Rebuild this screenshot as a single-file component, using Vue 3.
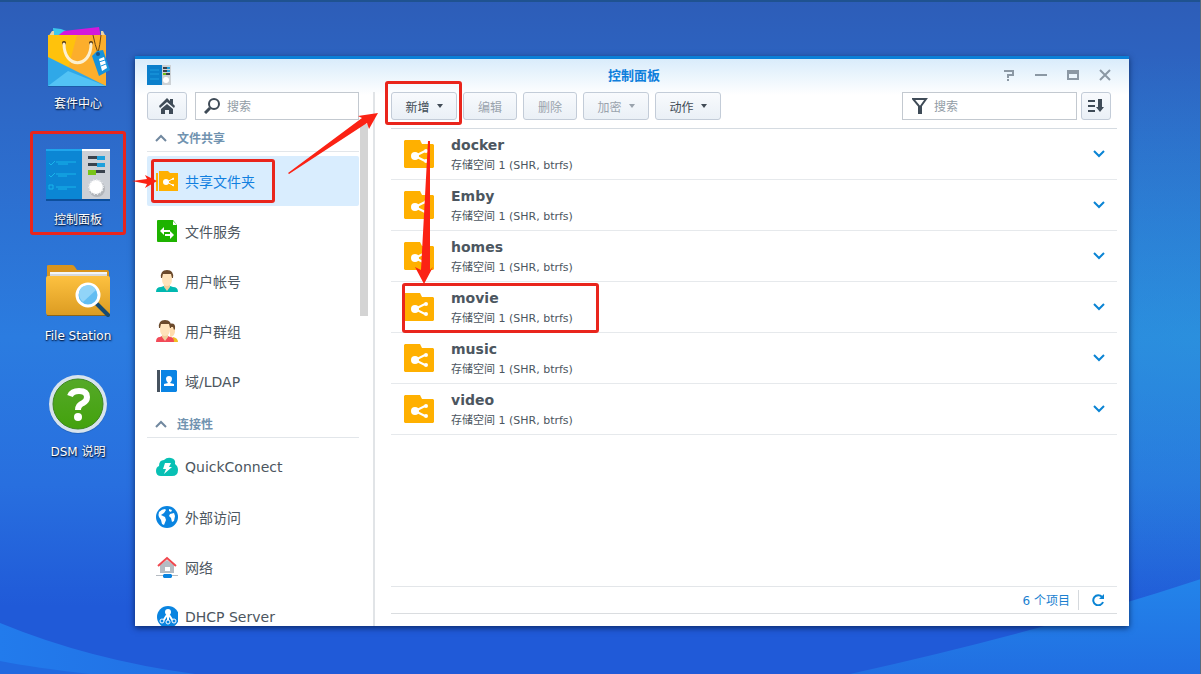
<script setup>
import { ref } from 'vue'

const sideQuery = ref('')
const filterQuery = ref('')
const selected = ref('share')

const shortcuts = [
  { id: 'bag', label: '套件中心' },
  { id: 'panel', label: '控制面板' },
  { id: 'files', label: 'File Station' },
  { id: 'help', label: 'DSM 说明' },
]

const groups = [
  {
    title: '文件共享',
    items: [
      { id: 'share', label: '共享文件夹' },
      { id: 'service', label: '文件服务' },
      { id: 'user', label: '用户帐号' },
      { id: 'group', label: '用户群组' },
      { id: 'ldap', label: '域/LDAP' },
    ],
  },
  {
    title: '连接性',
    items: [
      { id: 'quick', label: 'QuickConnect' },
      { id: 'globe', label: '外部访问' },
      { id: 'network', label: '网络' },
      { id: 'dhcp', label: 'DHCP Server' },
    ],
  },
]

const actions = [
  { label: '新增', menu: true, disabled: false },
  { label: '编辑', menu: false, disabled: true },
  { label: '删除', menu: false, disabled: true },
  { label: '加密', menu: true, disabled: true },
  { label: '动作', menu: true, disabled: false },
]

const folders = ['docker', 'Emby', 'homes', 'movie', 'music', 'video']
</script>

<template>
  <div class="desktop">
    <svg class="wallpaper" viewBox="0 0 1201 674" preserveAspectRatio="none" aria-hidden="true">
      <defs>
        <linearGradient id="waveL" x1="0" y1="0" x2="1" y2="0">
          <stop offset="0" stop-color="#227bec" />
          <stop offset="1" stop-color="#2270e4" />
        </linearGradient>
        <linearGradient id="waveR" x1="0" y1="0" x2="0" y2="1">
          <stop offset="0" stop-color="#2384ea" />
          <stop offset="1" stop-color="#216fe2" />
        </linearGradient>
      </defs>
      <path d="M0 623Q90 660 195 674H0Z" fill="url(#waveL)" />
      <path d="M0 661Q35 668 90 674H0Z" fill="#2169e0" />
      <path d="M1201 579Q1040 632 850 674H1201Z" fill="url(#waveR)" />
      <path d="M0 0H1201V2H0Z" fill="#1f5290" />
      <path d="M1200 0H1201V674H1200Z" fill="#55697f" />
    </svg>

    <nav class="shortcuts" aria-label="桌面">
      <button v-for="s in shortcuts" :key="s.id" class="shortcut" type="button">
        <svg v-if="s.id === 'bag'" class="big-icon" viewBox="0 0 64 64">
          <path d="M7 2l8 1 8 3-15 8z" fill="#3cc8ec" />
          <path d="M10 11l8-6 35-4 2 11z" fill="#d418dc" />
          <path d="M2 11l4-6h2v7zM60 11l-3-6h-2v7z" fill="#e8d5a8" />
          <path d="M2 9h58v51H2z" fill="#ffc20c" />
          <path d="M31 9h29v51L22 43z" fill="#fcae2c" />
          <path d="M2 31v29h58z" fill="#2fa8e8" />
          <path d="M2 60l20-15 38 15z" fill="#53c3f5" />
          <path d="M2 60h58v1H2z" fill="#1c5ba8" />
          <circle cx="18" cy="17" r="2" fill="#4c3413" />
          <circle cx="45" cy="17" r="2" fill="#4c3413" />
          <path d="M18 18c0 25 27 25 27 0" fill="none" stroke="#fdf0cf" stroke-width="3" stroke-linecap="round" />
          <path d="M47 9q2 10 5 18M55 9q-1 10-3 18" fill="none" stroke="#6b4511" stroke-width="1" />
          <path d="M46 30l5-5 6-1 7 20-11 6z" fill="#1693dc" />
          <circle cx="52" cy="28" r="2" fill="#1b5288" />
          <path d="M53 33l5-2 3 11-5 3z" fill="#fff" />
          <path d="M53 36l6-2M55 40l5-2" stroke="#1693dc" stroke-width="1" />
        </svg>
        <svg v-else-if="s.id === 'panel'" class="big-icon" viewBox="0 0 64 64">
          <path d="M0 7h36v51H0z" fill="#0b86d4" />
          <path d="M0 7h36v2H0z" fill="#1fa5ec" />
          <path d="M36 7h28v51H36z" fill="#ccd0d6" />
          <path d="M36 7h28v2H36z" fill="#fff" />
          <path d="M0 57h64v2H0z" fill="#0d4f9d" />
          <path d="M3 21l2 2 4-4M3 33l2 2 4-4M3 43h4v4H3zM10 20h20M12 22h10M10 32h20M12 34h9M10 45h20M12 47h9" fill="none" stroke="#18b5ea" stroke-width="1" />
          <path d="M42 14h16v3H42zM42 21h16v3H42zM42 28h17v3H42z" fill="#39424d" />
          <path d="M51 14h8v4h-8zM51 21h8v4h-8z" fill="#1ea0dc" />
          <path d="M42 28h8v5h-8z" fill="#78c418" />
          <circle cx="51" cy="47" r="8" fill="#b1b5ba" />
          <circle cx="50" cy="45" r="7" fill="#fff" />
          <circle cx="50" cy="45" r="7" fill="none" stroke="#e8eaed" stroke-width="2" stroke-dasharray="1 2" />
        </svg>
        <svg v-else-if="s.id === 'files'" class="big-icon" viewBox="0 0 64 64">
          <defs>
            <linearGradient id="folderFront" x1="0" y1="0" x2="0" y2="1">
              <stop offset="0" stop-color="#fdc140" />
              <stop offset="1" stop-color="#dc9c22" />
            </linearGradient>
          </defs>
          <path d="M1 8q0-1 2-1h23q2 0 3 2l2 3h30q2 0 2 2v20H1z" fill="#d8941d" />
          <path d="M4 14h57v8H4z" fill="#f4f5f6" />
          <path d="M4 17h57" stroke="#b9bcc0" stroke-width="1" />
          <path d="M0 20q0-2 2-2h60q2 0 2 2v35q0 2-2 2H2q-2 0-2-2z" fill="url(#folderFront)" />
          <path d="M1 57h62v1H1z" fill="#8a651b" />
          <path d="M51 46l11 11" stroke="#174b72" stroke-width="4" stroke-linecap="round" />
          <circle cx="42" cy="37" r="11" fill="#62bdf2" stroke="#fff" stroke-width="3" />
          <path d="M33 35a9 9 0 0 1 17-3L37 44q-4-3-4-9z" fill="#91d4f8" />
        </svg>
        <svg v-else class="big-icon" viewBox="0 0 64 64">
          <defs>
            <linearGradient id="helpFill" x1="0" y1="0" x2="0" y2="1">
              <stop offset="0" stop-color="#55a928" />
              <stop offset="1" stop-color="#43a20d" />
            </linearGradient>
          </defs>
          <circle cx="32" cy="31" r="29" fill="#1d5aa4" opacity=".5" />
          <circle cx="32" cy="30" r="29" fill="#d7e3ee" />
          <circle cx="32" cy="30" r="25" fill="url(#helpFill)" stroke="#3c8521" stroke-width="1" />
          <path d="M24 22q2-5 9-5 8 0 8 6 0 4-4 6-5 2-5 7" fill="none" stroke="#fff" stroke-width="6" />
          <circle cx="32" cy="43" r="4" fill="#fff" />
        </svg>
        <span>{{ s.label }}</span>
      </button>
    </nav>

    <main class="window">
      <header class="titlebar">
        <svg class="app-icon" viewBox="0 0 24 20">
          <path d="M0 0h15v20H0z" fill="#0b7fcb" />
          <path d="M3 5h9M3 9h9M3 14h9" stroke="#1f9ee0" stroke-width="1" />
          <path d="M15 0h9v20h-9z" fill="#cdd2d6" />
          <path d="M16 3h4M16 6h4M19 9h4" stroke="#39424d" stroke-width="2" />
          <path d="M20 3h3M20 6h3" stroke="#1ea0dc" stroke-width="2" />
          <path d="M16 9h3" stroke="#6fbe1a" stroke-width="2" />
          <circle cx="19" cy="15" r="3" fill="#fff" />
        </svg>
        <h1>控制面板</h1>
        <div class="controls">
          <button type="button" aria-label="帮助"><svg viewBox="0 0 12 12"><path d="M1 2h9v4H5v3M5 10v2" /></svg></button>
          <button type="button" aria-label="最小化"><svg viewBox="0 0 12 12"><path d="M0 6h12" /></svg></button>
          <button type="button" aria-label="最大化"><svg viewBox="0 0 12 12"><path d="M0 1h12v4H0z" class="solid" /><path d="M1 2v8h10V2" /></svg></button>
          <button type="button" aria-label="关闭"><svg viewBox="0 0 12 12"><path d="M1 1l10 10M11 1L1 11" /></svg></button>
        </div>
      </header>

      <div class="body">
        <aside class="sidebar">
          <div class="side-tools">
            <button class="btn home" type="button" aria-label="首页">
              <svg viewBox="0 0 16 16">
                <path d="M0 8l8-8 3 3V1h3v5l2 2-1 2-7-6-7 6z" />
                <path d="M2 11l6-5 6 5v5h-4v-4H6v4H2z" />
              </svg>
            </button>
            <label class="field side-field">
              <svg class="magnifier" viewBox="0 0 16 16">
                <circle cx="10" cy="6" r="5" />
                <path d="M6 10l-5 5" class="handle" />
              </svg>
              <input v-model="sideQuery" type="text" placeholder="搜索" aria-label="搜索" />
            </label>
          </div>
          <div class="side-body">
            <nav class="side-nav" aria-label="控制面板">
              <section v-for="g in groups" :key="g.title">
                <h2>
                  <svg viewBox="0 0 12 8"><path d="M1 7l5-5 5 5" /></svg>
                  {{ g.title }}
                </h2>
                <button
                  v-for="i in g.items"
                  :key="i.id"
                  type="button"
                  class="nav-item"
                  :class="{ active: selected === i.id }"
                  @click="selected = i.id"
                >
                  <svg viewBox="0 0 22 22">
                    <g v-if="i.id === 'share'">
                      <path d="M0 3h2v18H0z" fill="#ffb000" />
                      <path d="M3 1h9l2 2h8v18H3z" fill="#ffb000" />
                      <path d="M18 8l-7 4 7 4" fill="none" stroke="#fff" stroke-width="1" />
                      <circle cx="10" cy="12" r="3" fill="#fff" /><circle cx="17" cy="9" r="1" fill="#fff" /><circle cx="17" cy="15" r="1" fill="#fff" />
                    </g>
                    <g v-else-if="i.id === 'service'">
                      <path d="M2 0h15l4 5v17H2q-1 0-1-1V1q0-1 1-1z" fill="#1eb300" />
                      <path d="M17 1v4h4z" fill="#fff" />
                      <path d="M4 11l4-4v3h6v2H8v3zM18 15l-4-4v3H9v2h5v3z" fill="#fff" />
                    </g>
                    <g v-else-if="i.id === 'user'">
                      <path d="M0 22q0-5 5-5l3-1h6l3 1q5 0 5 5z" fill="#00b8b0" />
                      <path d="M8 13h6v4l-3 4-3-4z" fill="#f2cf9c" />
                      <path d="M6 5q0-3 5-3t5 3v4q0 7-5 7T6 9z" fill="#ffe3bb" />
                      <path d="M5 8Q4 0 11 0t6 8h-1l-1-4H7L6 8z" fill="#6b4a2c" />
                    </g>
                    <g v-else-if="i.id === 'group'">
                      <path d="M14 22l3-5q5 1 5 5z" fill="#f0bd21" />
                      <path d="M14 6h5v6q-1 5-5 5z" fill="#ffdcae" />
                      <path d="M13 4q7-2 6 5l-1 1-1-3h-4z" fill="#6b4a2c" />
                      <path d="M0 22q0-5 4-5l2-1h6l2 1q4 0 4 5z" fill="#f24a58" />
                      <path d="M6 13h6v4l-3 4-3-4z" fill="#f2cf9c" />
                      <path d="M4 5q0-3 5-3t5 3v4q0 7-5 7T4 9z" fill="#ffe3bb" />
                      <path d="M3 8Q2 0 9 0t6 8h-1l-1-4H5L4 8z" fill="#6b4a2c" />
                    </g>
                    <g v-else-if="i.id === 'ldap'">
                      <path d="M1 0h3v22H1z" fill="#46525f" />
                      <path d="M5 0h15l1 1v20l-1 1H5z" fill="#0a84e4" />
                      <path d="M10 9q0-3 3-3t3 3q0 2-2 4l4 1v2H8v-2l4-1q-2-2-2-4z" fill="#fff" />
                    </g>
                    <g v-else-if="i.id === 'quick'">
                      <path d="M5 20q-5 0-5-5 0-4 3-5 0-6 5-6 3-3 7-2 5 1 4 6 3 2 3 6 0 6-6 6z" fill="#08c0b4" />
                      <path d="M9 7h6l-2 4h3l-8 7 2-5H7z" fill="#fff" />
                    </g>
                    <g v-else-if="i.id === 'globe'">
                      <circle cx="11" cy="11" r="11" fill="#0a84e0" />
                      <path d="M3 6q3-3 6-3l1 1-2 3-3 2 4 2 1 3-2 5-2-1-1-4-2-3q-1-2 0-5zM13 3l3 1-1 2-2-1zM14 8l4-1 1 3-1 5-2 1-1-4-2-2z" fill="#fff" />
                    </g>
                    <g v-else-if="i.id === 'network'">
                      <path d="M4 9l7-5 7 5v8H4z" fill="#b5bbc2" />
                      <path d="M9 11h5v4H9z" fill="#fff" />
                      <path d="M2 10l9-8 9 8" fill="none" stroke="#f0474e" stroke-width="2" />
                      <path d="M0 19h22v1H0z" fill="#b5bbc2" />
                      <path d="M8 18h7l1 1v2l-1 1H8l-1-1v-2z" fill="#0a84e0" />
                    </g>
                    <g v-else>
                      <circle cx="12" cy="11" r="11" fill="#0a84e0" />
                      <path d="M7 15l4-6h2l4 6M12 9v6" fill="none" stroke="#fff" stroke-width="2" />
                      <circle cx="12" cy="6" r="3" fill="#fff" />
                      <g fill="#0a84e0" stroke="#fff" stroke-width="1"><circle cx="6" cy="15" r="2" /><circle cx="12" cy="16" r="2" /><circle cx="18" cy="15" r="2" /></g>
                    </g>
                  </svg>
                  {{ i.label }}
                </button>
              </section>
            </nav>
            <div class="scroll-thumb"></div>
          </div>
        </aside>

        <section class="content">
          <div class="toolbar">
            <button v-for="a in actions" :key="a.label" class="btn" :class="{ menu: a.menu }" type="button" :disabled="a.disabled">
              {{ a.label }}<i v-if="a.menu" class="caret"></i>
            </button>
            <label class="field filter-field">
              <svg class="funnel" viewBox="0 0 16 16"><path d="M1 1h13L9 8v7H7V8z" /></svg>
              <input v-model="filterQuery" type="text" placeholder="搜索" aria-label="筛选" />
            </label>
            <button class="btn sort" type="button" aria-label="排序">
              <svg viewBox="0 0 16 14">
                <path d="M0 2h7M0 7h7M0 12h7" stroke="#3f4b57" stroke-width="2" />
                <path d="M10 0h4v8h2l-4 5-4-5h2z" fill="#3f4b57" />
              </svg>
            </button>
          </div>

          <ul class="folders">
            <li v-for="f in folders" :key="f">
              <svg class="folder" viewBox="0 0 30 28">
                <path d="M1 0h15l2 4h11l1 1v22l-1 1H1l-1-1V1z" fill="#ffb000" />
                <path d="M21 11l-10 5 10 5" fill="none" stroke="#fff" stroke-width="2" />
                <circle cx="11" cy="16" r="4" fill="#fff" /><circle cx="22" cy="11" r="2" fill="#fff" /><circle cx="22" cy="21" r="2" fill="#fff" />
              </svg>
              <div class="folder-text">
                <strong>{{ f }}</strong>
                <span>存储空间 1 (SHR, btrfs)</span>
              </div>
              <button class="expand" type="button" :aria-label="'展开 ' + f">
                <svg viewBox="0 0 12 8"><path d="M1 1l5 5 5-5" /></svg>
              </button>
            </li>
          </ul>

          <footer class="status">
            <span>6 个项目</span>
            <button type="button" aria-label="刷新">
              <svg viewBox="0 0 12 12">
                <path d="M10 3a5 5 0 1 0 1 5" fill="none" stroke="#0a84d4" stroke-width="2" />
                <path d="M12 0v5H7z" fill="#0a84d4" />
              </svg>
            </button>
          </footer>
        </section>
      </div>
    </main>

    <div class="mark mark-shortcut"></div>
    <div class="mark mark-nav"></div>
    <div class="mark mark-new"></div>
    <div class="mark mark-movie"></div>
    <svg class="arrows" width="640" height="360" viewBox="0 0 640 360" aria-hidden="true">
      <g fill="#fb2214">
        <path d="M132 181l15-2-2-4 12 6-12 7 2-4z" />
        <path d="M288 173l74-55-4-2 20-3-9 16-2-6-78 51z" />
        <path d="M428 141h2l0 129 3-3-9 17-9-17 6 3z" />
      </g>
    </svg>
  </div>
</template>

<style>
body {
  margin: 0;
}
</style>

<style scoped>
.desktop {
  position: relative;
  display: flex;
  box-sizing: border-box;
  height: 100vh;
  overflow: hidden;
  font-family: "DejaVu Sans", "Noto Sans CJK SC", sans-serif;
  font-size: 12px;
  color: #4c5660;
  background:
    radial-gradient(ellipse 60% 42% at 100% 50%, rgba(42, 172, 218, 0.4), transparent),
    linear-gradient(#2d5db8 0%, #2d69c8 18%, #2b7ce0 50%, #286fdf 72%, #205ad8 90%, #205ad8 100%);
}
.desktop *,
.desktop *::before {
  box-sizing: border-box;
}
button,
input {
  font: inherit;
  color: inherit;
}
button {
  border: 0;
  padding: 0;
  background: none;
}
.wallpaper {
  position: absolute;
  inset: 0;
  width: 100%;
  height: 100%;
}
.shortcuts {
  position: relative;
  display: flex;
  flex-direction: column;
  gap: 28px;
  width: 135px;
  flex: none;
  padding: 26px 9px 0 30px;
}
.shortcut {
  display: flex;
  flex-direction: column;
  align-items: center;
  gap: 4px;
  color: #fff;
  line-height: 20px;
  white-space: nowrap;
  text-shadow: 1px 1px 2px #06224f, 0 1px 1px #06224f;
}
.big-icon {
  width: 64px;
  height: 64px;
}
.window {
  position: relative;
  display: flex;
  flex: 1;
  flex-direction: column;
  min-width: 0;
  margin: 56px 72px 48px 0;
  border-top: 3px solid #0a80d8;
  background: linear-gradient(#d9ecfb, #fff 36px);
  box-shadow: 0 2px 6px rgba(0, 20, 60, 0.7);
}
.titlebar {
  display: grid;
  grid-template-columns: 1fr auto 1fr;
  align-items: center;
  height: 33px;
  flex: none;
  padding: 0 8px 2px 12px;
}
.app-icon {
  width: 24px;
  height: 20px;
}
h1 {
  margin: 0;
  font-size: 13px;
  font-weight: 700;
  color: #0f7fdc;
}
.controls {
  display: flex;
  justify-content: flex-end;
}
.controls button {
  display: flex;
  align-items: center;
  justify-content: center;
  width: 32px;
  height: 24px;
}
.controls svg {
  width: 12px;
  height: 12px;
  fill: none;
  stroke: #8b98a4;
  stroke-width: 2;
}
.controls .solid {
  fill: #8b98a4;
  stroke: none;
}
.body {
  display: flex;
  flex: 1;
  min-height: 0;
}
.sidebar {
  display: flex;
  flex-direction: column;
  width: 240px;
  flex: none;
  padding-left: 12px;
  border-right: 2px solid #e1e4e7;
}
.side-tools {
  display: flex;
  gap: 8px;
  padding-right: 14px;
  flex: none;
}
.btn {
  display: flex;
  align-items: center;
  justify-content: center;
  flex: none;
  width: 54px;
  height: 28px;
  border: 1px solid #c3ccd8;
  border-radius: 3px;
  background: linear-gradient(#f8fafd, #eaf0f6);
  color: #414b55;
}
.btn.menu {
  width: 66px;
  gap: 7px;
}
.btn:disabled {
  color: #9aa3ad;
}
.caret {
  border: 3px solid transparent;
  border-top: 4px solid currentColor;
  border-bottom: 0;
}
.btn.home {
  width: 40px;
}
.home svg {
  width: 16px;
  height: 16px;
  fill: #3f4b57;
}
.field {
  display: flex;
  align-items: center;
  height: 28px;
  border: 1px solid #c3c9d0;
  background: #fff;
}
.field input {
  flex: 1;
  width: 0;
  min-width: 0;
  border: 0;
  outline: 0;
  padding: 2px 0 0;
  background: none;
}
.field input::placeholder {
  color: #929ca6;
  opacity: 1;
}
.side-field {
  flex: 1;
  gap: 7px;
  padding: 0 8px;
}
.filter-field {
  width: 175px;
  margin-left: auto;
  gap: 6px;
  padding: 0 9px;
}
.magnifier,
.funnel {
  width: 16px;
  height: 16px;
  flex: none;
  fill: none;
  stroke: #3f4b57;
  stroke-width: 2;
}
.magnifier .handle {
  stroke-width: 3;
}
.side-body {
  display: flex;
  flex: 1;
  gap: 1px;
  min-height: 0;
}
.side-nav {
  width: 212px;
  overflow: hidden;
}
.scroll-thumb {
  width: 8px;
  height: 192px;
  margin-top: 4px;
  background: #d4d4d4;
}
h2 {
  display: flex;
  align-items: center;
  gap: 10px;
  height: 32px;
  margin: 0 0 4px;
  padding: 4px 0 0 8px;
  border-bottom: 1px solid #e2e6ea;
  font-size: 12px;
  font-weight: 700;
  color: #7193b0;
}
h2 svg {
  width: 12px;
  height: 8px;
  fill: none;
  stroke: #71889f;
  stroke-width: 2;
}
.nav-item {
  display: flex;
  align-items: center;
  gap: 7px;
  width: 100%;
  height: 50px;
  padding-left: 9px;
  border-radius: 2px;
  font-size: 14px;
  text-align: left;
}
.nav-item.active {
  background: #d9edfe;
  color: #1180e0;
}
.nav-item svg {
  width: 22px;
  height: 22px;
  flex: none;
}
.content {
  display: flex;
  flex: 1;
  flex-direction: column;
  min-width: 0;
  padding: 0 12px 12px 16px;
}
.toolbar {
  display: flex;
  gap: 6px;
  height: 37px;
  flex: none;
  padding-right: 6px;
  border-bottom: 1px solid #d5dbe1;
}
.btn.sort {
  width: 30px;
  margin-left: -2px;
}
.sort svg {
  width: 16px;
  height: 14px;
}
.folders {
  flex: 1;
  min-height: 0;
  margin: 0;
  padding: 0;
  list-style: none;
}
.folders li {
  display: flex;
  align-items: center;
  gap: 17px;
  height: 51px;
  padding: 0 9px 0 13px;
  border-bottom: 1px solid #e6e9ec;
}
.folder {
  width: 30px;
  height: 28px;
}
.folder-text {
  display: flex;
  flex: 1;
  flex-direction: column;
  padding-top: 3px;
}
.folder-text strong {
  font-size: 14px;
  line-height: 20px;
}
.folder-text span {
  font-size: 11px;
  line-height: 22px;
}
.expand {
  display: flex;
  align-items: center;
  justify-content: center;
  width: 18px;
  height: 24px;
}
.expand svg {
  width: 12px;
  height: 8px;
  fill: none;
  stroke: #0a84d4;
  stroke-width: 2;
}
.status {
  display: flex;
  align-items: center;
  justify-content: flex-end;
  flex: none;
  height: 28px;
  gap: 8px;
  border-top: 1px solid #e3e6e9;
  border-bottom: 1px solid #dadde0;
  color: #1a7fd0;
}
.status span {
  padding-bottom: 2px;
}
.status button {
  display: flex;
  align-items: center;
  justify-content: center;
  width: 39px;
  height: 20px;
  border-left: 1px solid #d5d9dd;
}
.status svg {
  width: 12px;
  height: 12px;
}
.arrows,
.mark {
  position: absolute;
  pointer-events: none;
}
.arrows {
  top: 0;
  left: 0;
}
.mark {
  border: 3px solid #e9251c;
  border-radius: 3px;
}
.mark-shortcut {
  top: 131px;
  left: 30px;
  width: 96px;
  height: 104px;
}
.mark-nav {
  top: 159px;
  left: 151px;
  width: 124px;
  height: 44px;
}
.mark-new {
  top: 81px;
  left: 385px;
  width: 77px;
  height: 44px;
}
.mark-movie {
  top: 283px;
  left: 402px;
  width: 197px;
  height: 50px;
}
</style>
